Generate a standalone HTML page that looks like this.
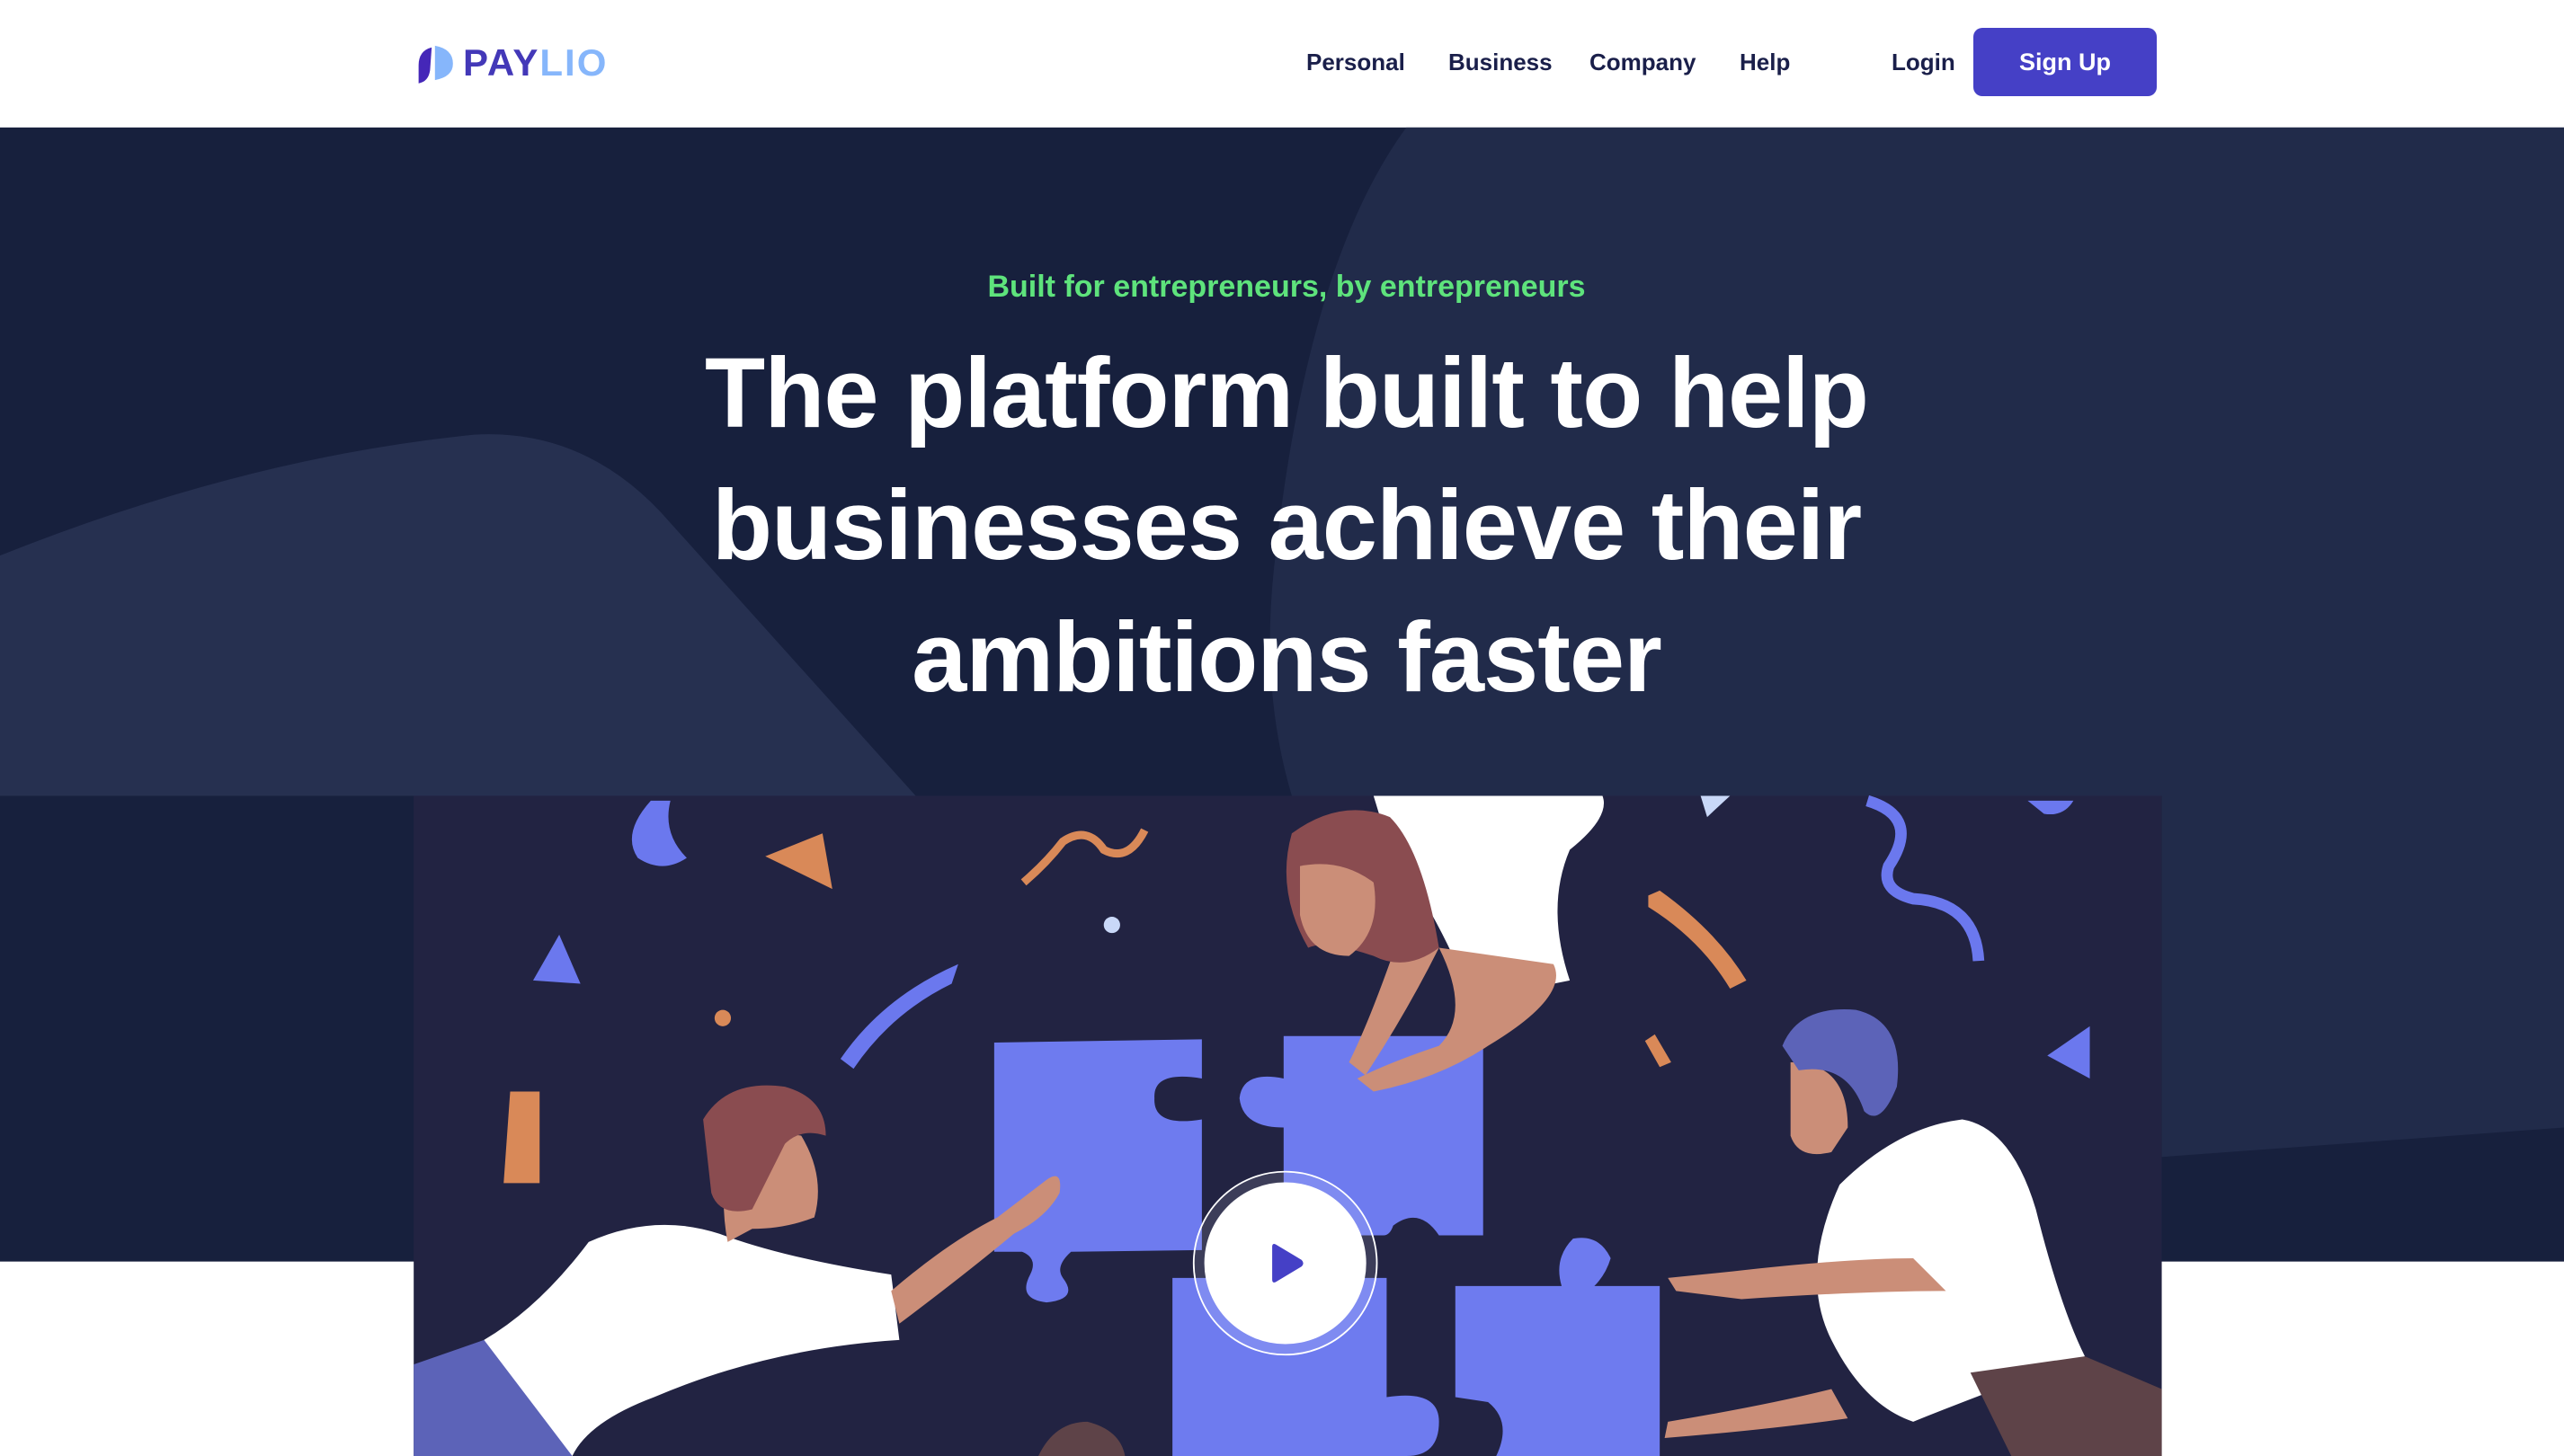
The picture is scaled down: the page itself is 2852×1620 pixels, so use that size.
<!DOCTYPE html>
<html><head><meta charset="utf-8"><style>
*{margin:0;padding:0;box-sizing:border-box}
body{width:2852px;height:1620px;overflow:hidden;background:#fff;font-family:"Liberation Sans",sans-serif;position:relative}
#bg{position:absolute;left:0;top:0;width:2852px;height:1620px}
.nav a{position:absolute;top:54px;font-size:26px;font-weight:bold;color:#1a1f4a;text-decoration:none}
.btn{position:absolute;left:2195px;top:31px;width:204px;height:76px;background:#4540c6;border-radius:10px;color:#fff;font-size:27px;font-weight:bold;text-align:center;line-height:76px}
.logo{position:absolute;left:515px;top:46px;font-size:42px;font-weight:bold;letter-spacing:2px;color:#4338b8}
.sub{position:absolute;left:0;width:2862px;top:300px;text-align:center;color:#5ee37c;font-size:34px;font-weight:bold}
h1{position:absolute;left:0;width:2862px;top:364px;text-align:center;color:#fff;font-size:110px;line-height:147px;font-weight:bold;letter-spacing:-1px}
</style></head><body>
<svg id="bg" viewBox="0 0 1568 891" preserveAspectRatio="none">
<rect x="0" y="78" width="1568" height="694" fill="#17203d"/>
<path d="M0 340 Q150 280 290 266 Q360 262 410 320 L560 487 L0 487Z" fill="#263050"/>
<path d="M860 78 L1568 78 L1568 690 L1322 708 L1322 487 L790 487 Q770 420 780 340 Q800 160 860 78Z" fill="#212b4a"/>
<rect x="253" y="487" width="1069" height="404" fill="#222342"/>
<g>
<path d="M398 490 Q380 510 390 525 Q405 535 420 525 Q405 510 410 490Z" fill="#6b78ee"/>
<path d="M468 524 L503 510 L509 544Z" fill="#d98958"/>
<path d="M326 600 L342 572 L355 602Z" fill="#6b78ee"/>
<path d="M514 648 Q540 610 586 590 L582 602 Q545 620 522 654Z" fill="#6b78ee"/>
<path d="M312 668 L330 668 L330 724 L308 724Z" fill="#d98958"/>
<circle cx="442" cy="623" r="5" fill="#d98958"/>
<circle cx="680" cy="566" r="5" fill="#c9d8f8"/>
<path d="M626 540 Q640 528 650 515 Q665 505 675 520 Q690 528 700 508" stroke="#d98958" stroke-width="5" fill="none"/>
<path d="M1008 548 L1015 545 Q1050 570 1068 600 L1058 605 Q1040 575 1008 555Z" fill="#d98958"/>
<path d="M1006 637 L1012 633 L1022 650 L1015 653Z" fill="#d98958"/>
<path d="M1040 487 L1058 487 L1044 500Z" fill="#c9d8f8"/>
<path d="M1142 490 Q1175 500 1155 530 Q1150 545 1170 550 Q1208 552 1210 588" stroke="#6b78ee" stroke-width="7" fill="none"/>
<path d="M1252 646 L1278 628 L1278 660Z" fill="#6b78ee"/>
<path d="M1240 490 L1268 490 Q1262 500 1250 498Z" fill="#6b78ee"/>
<path d="M608 638 L735 636 L735 660 Q705 655 706 672 Q705 690 735 685 L735 765 L655 766 Q645 775 650 782 Q660 795 640 797 Q622 795 630 780 Q635 770 625 766 L608 766Z" fill="#6e7bef"/>
<path d="M785 634 L907 634 L907 756 L880 756 Q868 738 852 750 Q850 756 846 756 L785 756 L785 690 Q760 690 758 672 Q760 655 785 660Z" fill="#6e7bef"/>
<path d="M717 782 L848 782 L848 855 Q880 850 880 870 Q880 891 860 891 L717 891Z" fill="#6e7bef"/>
<path d="M890 787 L955 787 Q950 770 962 758 Q978 755 985 770 Q982 780 975 787 L1015 787 L1015 891 L915 891 Q925 870 910 858 L890 855Z" fill="#6e7bef"/>
<path d="M840 487 L980 487 Q985 500 960 520 Q945 555 960 600 L900 612 Q880 560 850 520Z" fill="#fff"/>
<path d="M880 580 Q900 620 880 640 Q850 650 830 660 L840 668 Q880 660 910 640 Q960 610 950 590Z" fill="#cb8e78"/>
<path d="M860 560 Q840 620 825 650 L835 658 Q860 620 880 580Z" fill="#cb8e78"/>
<path d="M790 510 Q820 488 850 500 Q870 520 880 580 Q860 595 840 585 Q810 575 800 580 Q780 545 790 510Z" fill="#8a4c50"/>
<path d="M795 530 Q820 525 840 540 Q845 570 825 585 Q800 585 795 560Z" fill="#cb8e78"/>
<path d="M296 820 Q330 800 360 760 Q400 742 440 755 Q480 770 545 780 L550 820 Q470 825 400 855 Q360 870 350 891 L296 891Z" fill="#fff"/>
<path d="M253 835 L296 820 L350 891 L253 891Z" fill="#5c63b8"/>
<path d="M545 790 Q580 760 610 745 L640 722 Q650 715 648 730 Q640 745 620 755 Q590 780 550 810Z" fill="#cb8e78"/>
<path d="M445 700 Q460 690 490 695 Q505 720 498 745 Q480 752 460 752 L445 760 Q440 735 445 700Z" fill="#cb8e78"/>
<path d="M430 685 Q445 660 480 665 Q505 672 505 695 Q490 690 480 700 Q470 720 460 740 Q440 745 435 730Z" fill="#8a4c50"/>
<path d="M1125 725 Q1160 690 1200 685 Q1230 690 1245 740 Q1260 800 1275 830 Q1220 850 1170 870 Q1140 860 1120 820 Q1100 780 1125 725Z" fill="#fff"/>
<path d="M1205 840 L1275 830 L1322 850 L1322 891 L1230 891Z" fill="#5e4348"/>
<path d="M1170 770 Q1130 770 1060 778 L1020 782 L1025 790 L1065 795 Q1140 790 1190 790Z" fill="#cb8e78"/>
<path d="M1120 850 Q1080 860 1020 870 L1018 880 Q1080 875 1130 868Z" fill="#cb8e78"/>
<path d="M1095 650 Q1130 650 1130 690 L1120 705 Q1100 710 1095 695Z" fill="#cb8e78"/>
<path d="M1090 640 Q1100 615 1135 618 Q1165 625 1160 665 Q1150 690 1140 680 Q1130 650 1100 655Z" fill="#5c63b8"/>
<path d="M635 891 Q645 870 665 870 Q685 875 688 891Z" fill="#5e4348"/>
</g>
<circle cx="786" cy="773" r="56" fill="rgba(255,255,255,0.12)" stroke="#fff" stroke-width="1"/>
<circle cx="786" cy="773" r="49.5" fill="#fff"/>
<path d="M778 763 Q778 760 781 762 L796 771 Q798 773 796 775 L781 784 Q778 786 778 783Z" fill="#4540c6"/>
<path d="M264 29 Q256 31 256 40 L256 51 Q262 50 263 43Z" fill="#4527b8"/>
<path d="M266 28 Q277 30 277 39 Q277 47 266 49Z" fill="#86b6fb"/>
</svg>
<div class="logo">PAY<span style="color:#86b6fb">LIO</span></div>
<div class="nav"><a style="left:1453px">Personal</a><a style="left:1611px">Business</a><a style="left:1768px">Company</a><a style="left:1935px">Help</a><a style="left:2104px">Login</a></div>
<div class="btn">Sign Up</div>
<div class="sub">Built for entrepreneurs, by entrepreneurs</div>
<h1>The platform built to help<br>businesses achieve their<br>ambitions faster</h1>
</body></html>
